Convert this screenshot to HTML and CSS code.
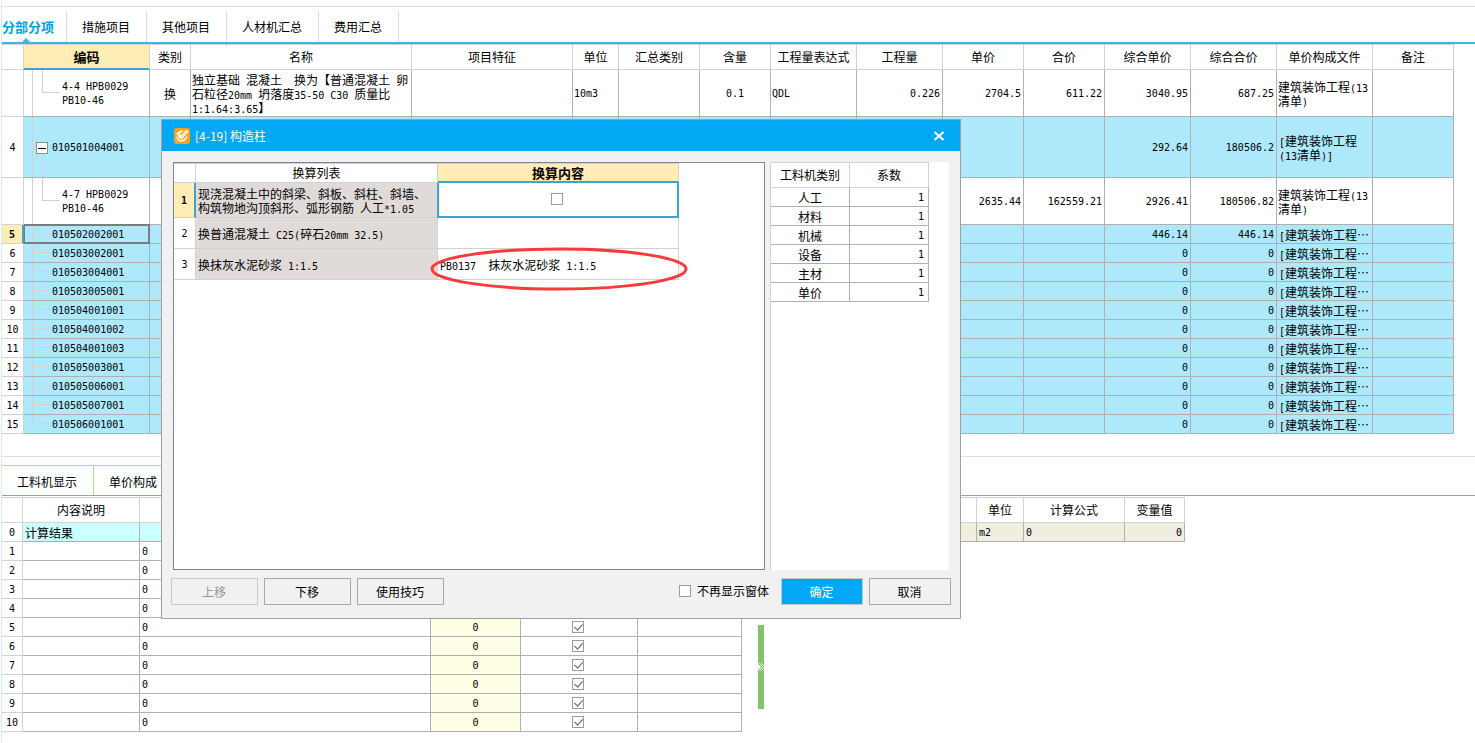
FILE: index.html
```html
<!DOCTYPE html>
<html lang="zh-CN">
<head>
<meta charset="utf-8">
<title>构造柱</title>
<link rel="stylesheet" href="styles.css">
</head>
<body>
<div class="app">
  <div class="toolbar-edge"></div>
  <nav class="tabs">
    <button class="tab active">分部分项</button>
    <button class="tab">措施项目</button>
    <button class="tab">其他项目</button>
    <button class="tab">人材机汇总</button>
    <button class="tab">费用汇总</button>
  </nav>

  <main class="list-pane">
    <table class="grid bill">
      <colgroup><col class="w22"><col class="w126"><col class="w41"><col class="w221"><col class="w161"><col class="w46"><col class="w81"><col class="w71"><col class="w86"><col class="w86"><col class="w81"><col class="w81"><col class="w86"><col class="w86"><col class="w96"><col class="w81"></colgroup>
      <thead>
        <tr><th></th><th class="current">编码</th><th>类别</th><th>名称</th><th>项目特征</th><th>单位</th><th>汇总类别</th><th>含量</th><th>工程量表达式</th><th>工程量</th><th>单价</th><th>合价</th><th>综合单价</th><th>综合合价</th><th>单价构成文件</th><th>备注</th></tr>
      </thead>
      <tbody>
        <tr class="tall"><th></th><td class="code child">4-4 HPB0029<br>PB10-46</td><td class="mid">换</td><td>独立基础<span class="m"> </span>混凝土<span class="m">  </span>换为【普通混凝土<span class="m"> </span>卵<br>石粒径<span class="m">20mm </span>坍落度<span class="m">35-50 C30 </span>质量比<br><span class="m">1:1.64:3.65</span>】</td><td></td><td class="num">10m3</td><td></td><td class="num mid">0.1</td><td class="num">QDL</td><td class="num end">0.226</td><td class="num end">2704.5</td><td class="num end">611.22</td><td class="num end">3040.95</td><td class="num end">687.25</td><td>建筑装饰工程<span class="m">(13</span><br>清单<span class="m">)</span></td><td></td></tr>
        <tr class="bill-row group"><th>4</th><td class="code parent"><button class="fold" aria-label="折叠"></button>010501004001</td><td></td><td></td><td></td><td></td><td></td><td></td><td></td><td></td><td></td><td></td><td class="num end">292.64</td><td class="num end">180506.2</td><td><span class="m">[</span>建筑装饰工程<br><span class="m">(13</span>清单<span class="m">)]</span></td><td></td></tr>
        <tr class="tall"><th></th><td class="code child">4-7 HPB0029<br>PB10-46</td><td></td><td></td><td></td><td></td><td></td><td></td><td></td><td></td><td class="num end">2635.44</td><td class="num end">162559.21</td><td class="num end">2926.41</td><td class="num end">180506.82</td><td>建筑装饰工程<span class="m">(13</span><br>清单<span class="m">)</span></td><td></td></tr>
        <tr class="bill-row selected"><th>5</th><td class="code">010502002001</td><td></td><td></td><td></td><td></td><td></td><td></td><td></td><td></td><td></td><td></td><td class="num end">446.14</td><td class="num end">446.14</td><td><span class="m">[</span>建筑装饰工程…</td><td></td></tr>
        <tr class="bill-row"><th>6</th><td class="code">010503002001</td><td></td><td></td><td></td><td></td><td></td><td></td><td></td><td></td><td></td><td></td><td class="num end">0</td><td class="num end">0</td><td><span class="m">[</span>建筑装饰工程…</td><td></td></tr>
        <tr class="bill-row"><th>7</th><td class="code">010503004001</td><td></td><td></td><td></td><td></td><td></td><td></td><td></td><td></td><td></td><td></td><td class="num end">0</td><td class="num end">0</td><td><span class="m">[</span>建筑装饰工程…</td><td></td></tr>
        <tr class="bill-row"><th>8</th><td class="code">010503005001</td><td></td><td></td><td></td><td></td><td></td><td></td><td></td><td></td><td></td><td></td><td class="num end">0</td><td class="num end">0</td><td><span class="m">[</span>建筑装饰工程…</td><td></td></tr>
        <tr class="bill-row"><th>9</th><td class="code">010504001001</td><td></td><td></td><td></td><td></td><td></td><td></td><td></td><td></td><td></td><td></td><td class="num end">0</td><td class="num end">0</td><td><span class="m">[</span>建筑装饰工程…</td><td></td></tr>
        <tr class="bill-row"><th>10</th><td class="code">010504001002</td><td></td><td></td><td></td><td></td><td></td><td></td><td></td><td></td><td></td><td></td><td class="num end">0</td><td class="num end">0</td><td><span class="m">[</span>建筑装饰工程…</td><td></td></tr>
        <tr class="bill-row"><th>11</th><td class="code">010504001003</td><td></td><td></td><td></td><td></td><td></td><td></td><td></td><td></td><td></td><td></td><td class="num end">0</td><td class="num end">0</td><td><span class="m">[</span>建筑装饰工程…</td><td></td></tr>
        <tr class="bill-row"><th>12</th><td class="code">010505003001</td><td></td><td></td><td></td><td></td><td></td><td></td><td></td><td></td><td></td><td></td><td class="num end">0</td><td class="num end">0</td><td><span class="m">[</span>建筑装饰工程…</td><td></td></tr>
        <tr class="bill-row"><th>13</th><td class="code">010505006001</td><td></td><td></td><td></td><td></td><td></td><td></td><td></td><td></td><td></td><td></td><td class="num end">0</td><td class="num end">0</td><td><span class="m">[</span>建筑装饰工程…</td><td></td></tr>
        <tr class="bill-row"><th>14</th><td class="code">010505007001</td><td></td><td></td><td></td><td></td><td></td><td></td><td></td><td></td><td></td><td></td><td class="num end">0</td><td class="num end">0</td><td><span class="m">[</span>建筑装饰工程…</td><td></td></tr>
        <tr class="bill-row"><th>15</th><td class="code last">010506001001</td><td></td><td></td><td></td><td></td><td></td><td></td><td></td><td></td><td></td><td></td><td class="num end">0</td><td class="num end">0</td><td><span class="m">[</span>建筑装饰工程…</td><td></td></tr>
      </tbody>
    </table>
  </main>

  <section class="detail-pane">
    <nav class="subtabs">
      <button class="tab">工料机显示</button>
      <button class="tab">单价构成</button>
    </nav>
    <div class="detail-body">
      <table class="grid quantities">
        <colgroup><col class="w21"><col class="w117"><col class="w291"><col class="w90"><col class="w117"><col class="w104"></colgroup>
        <thead><tr><th></th><th>内容说明</th><th></th><th></th><th></th><th></th></tr></thead>
        <tbody>
          <tr class="result"><th>0</th><td>计算结果</td><td></td><td></td><td></td><td></td></tr>
          <tr><th>1</th><td></td><td class="num">0</td><td class="num mid">0</td><td class="tick"><input type="checkbox" aria-label="累加" checked></td><td></td></tr>
          <tr><th>2</th><td></td><td class="num">0</td><td class="num mid">0</td><td class="tick"><input type="checkbox" aria-label="累加" checked></td><td></td></tr>
          <tr><th>3</th><td></td><td class="num">0</td><td class="num mid">0</td><td class="tick"><input type="checkbox" aria-label="累加" checked></td><td></td></tr>
          <tr><th>4</th><td></td><td class="num">0</td><td class="num mid">0</td><td class="tick"><input type="checkbox" aria-label="累加" checked></td><td></td></tr>
          <tr><th>5</th><td></td><td class="num">0</td><td class="num mid">0</td><td class="tick"><input type="checkbox" aria-label="累加" checked></td><td></td></tr>
          <tr><th>6</th><td></td><td class="num">0</td><td class="num mid">0</td><td class="tick"><input type="checkbox" aria-label="累加" checked></td><td></td></tr>
          <tr><th>7</th><td></td><td class="num">0</td><td class="num mid">0</td><td class="tick"><input type="checkbox" aria-label="累加" checked></td><td></td></tr>
          <tr><th>8</th><td></td><td class="num">0</td><td class="num mid">0</td><td class="tick"><input type="checkbox" aria-label="累加" checked></td><td></td></tr>
          <tr><th>9</th><td></td><td class="num">0</td><td class="num mid">0</td><td class="tick"><input type="checkbox" aria-label="累加" checked></td><td></td></tr>
          <tr><th>10</th><td></td><td class="num">0</td><td class="num mid">0</td><td class="tick"><input type="checkbox" aria-label="累加" checked></td><td></td></tr>
        </tbody>
      </table>
      <button class="splitter" aria-label="展开">
        <svg width="6" height="10" viewBox="0 0 6 10"><path d="M0 2 3 5 0 8Z" fill="#fff"/><path d="M1 1 5 5 1 9M3 1 6 4M3 9 6 6" fill="none" stroke="#e0f2da"/></svg>
      </button>
      <table class="grid variables">
        <colgroup><col class="w21"><col class="w192"><col class="w47"><col class="w101"><col class="w60"></colgroup>
        <thead><tr><th></th><th></th><th>单位</th><th>计算公式</th><th>变量值</th></tr></thead>
        <tbody><tr><th></th><td></td><td class="num">m2</td><td class="num">0</td><td class="num end">0</td></tr></tbody>
      </table>
    </div>
  </section>
</div>

<div class="dialog" role="dialog" aria-labelledby="dialog-title">
  <header class="titlebar">
    <svg width="16" height="16" viewBox="0 0 16 16"><rect width="16" height="16" rx="3" fill="#f9a51e"/><path d="M2 5.500 7 2.500 9.500 2.800 6 5.500 7 7.500 12.300 1.800 14.800 3.600 8.500 10.500 6 10.800 4 8Z" fill="#fff"/><path d="M2.200 7.500C2.500 11 3.500 13.500 6.500 13.800 10 14 13 12 13.500 7.500L10 11.200 6 12Z" fill="#fff4e0"/><path d="M7.500 9 13 3.500M3.500 7 5.500 6.500" fill="none" stroke="#f9b548" stroke-width=".8"/></svg>
    <h1 id="dialog-title">[4-19] 构造柱</h1>
    <button class="close" aria-label="关闭"><svg width="12" height="10" viewBox="0 0 12 10"><path d="M1.500 1 10.500 9M10.500 1 1.500 9" stroke="#fff" stroke-width="2.200"/></svg></button>
  </header>
  <div class="dialog-body">
    <div class="convert-panel">
      <table class="grid convert">
        <colgroup><col class="w22"><col class="w242"><col class="w241"></colgroup>
        <thead><tr><th></th><th>换算列表</th><th class="current">换算内容</th></tr></thead>
        <tbody>
          <tr class="first"><th>1</th><td>现浇混凝土中的斜梁、斜板、斜柱、斜墙、<br>构筑物地沟顶斜形、弧形钢筋<span class="m"> </span>人工<span class="m">*1.05</span></td><td class="tick focus"><input type="checkbox" aria-label="换算"></td></tr>
          <tr><th>2</th><td>换普通混凝土<span class="m"> C25(</span>碎石<span class="m">20mm 32.5)</span></td><td></td></tr>
          <tr><th>3</th><td>换抹灰水泥砂浆<span class="m"> 1:1.5</span></td><td class="mark-host"><span class="m">PB0137  </span>抹灰水泥砂浆<span class="m"> 1:1.5</span><svg class="mark" width="260" height="46" viewBox="0 0 260 46"><ellipse cx="130" cy="23" rx="127" ry="20" fill="none" stroke="#f93a3a" stroke-width="3"/></svg></td></tr>
        </tbody>
      </table>
    </div>
    <div class="factor-panel">
      <table class="grid factors">
        <colgroup><col class="w79"><col class="w79"></colgroup>
        <thead><tr><th>工料机类别</th><th>系数</th></tr></thead>
        <tbody>
          <tr><td class="mid">人工</td><td class="num end">1</td></tr>
          <tr><td class="mid">材料</td><td class="num end">1</td></tr>
          <tr><td class="mid">机械</td><td class="num end">1</td></tr>
          <tr><td class="mid">设备</td><td class="num end">1</td></tr>
          <tr><td class="mid">主材</td><td class="num end">1</td></tr>
          <tr><td class="mid">单价</td><td class="num end">1</td></tr>
        </tbody>
      </table>
    </div>
  </div>
  <footer class="actions">
    <button class="btn" disabled>上移</button>
    <button class="btn">下移</button>
    <button class="btn">使用技巧</button>
    <label class="hide-again"><input type="checkbox"> 不再显示窗体</label>
    <button class="btn narrow primary">确定</button>
    <button class="btn narrow">取消</button>
  </footer>
</div>
</body>
</html>
```
FILE: styles.css
```css
* { box-sizing: border-box; }

body {
  margin: 0;
  min-height: 100vh;
  background: #fff;
  color: #000;
  font: 12px/14px "Noto Sans CJK SC", sans-serif;
}

button, input { font: inherit; color: inherit; margin: 0; }

.app {
  margin-left: 1px;
  border-left: 1px solid #d8eef6;
  min-height: 100vh;
  overflow: hidden;
}

.toolbar-edge { height: 7px; border-bottom: 1px solid #e0e0e0; }

/* tabs */
.tabs {
  display: flex;
  padding-top: 4px;
  border-bottom: 2px solid #3fb4e0;
}

.tab {
  height: 31px;
  padding: 0 16px 0 15px;
  border: 0;
  border-right: 1px solid #dcdcdc;
  background: #fff;
  white-space: nowrap;
}

.tab.active {
  position: relative;
  padding: 0 12px 0 0;
  color: #00a2e8;
  font-size: 13px;
  font-weight: bold;
}

.tab.active::after {
  content: "";
  position: absolute;
  left: 20px;
  bottom: 0;
  border: 4px solid transparent;
  border-top: 0;
  border-bottom-color: #3fb4e0;
}

/* grids */
.grid {
  width: min-content;
  table-layout: fixed;
  border-collapse: separate;
  border-spacing: 0;
  flex: none;
}

.grid td, .grid th {
  height: 19px;
  padding: 2px 2px 0;
  border: solid #b0b0b0;
  border-width: 0 1px 1px 0;
  text-align: left;
  font-weight: normal;
  white-space: nowrap;
}

.grid th { border-color: #d2d2d2; text-align: center; padding: 2px 0 0; }
.grid thead th { height: 26px; border-top-width: 1px; padding: 0; }
.grid tbody th, .grid .num, .grid .code, .m { font-family: "DejaVu Sans Mono", "Noto Sans CJK SC", monospace; font-size: 10px; }
.m { white-space: pre; line-height: 1px; }
.grid .mid, .grid .tick { text-align: center; }
.grid .tick { padding: 0 2px 1px 0; }
.grid .end { text-align: right; }

.grid th.current {
  background: #ffedb5;
  border-bottom: 2px solid #3ba5d0;
  font-size: 13px;
  font-weight: bold;
}

.w21 { width: 21px; } .w22 { width: 22px; } .w41 { width: 41px; } .w46 { width: 46px; }
.w47 { width: 47px; } .w60 { width: 60px; } .w71 { width: 71px; } .w79 { width: 79px; }
.w81 { width: 81px; } .w86 { width: 86px; } .w90 { width: 90px; } .w96 { width: 96px; }
.w101 { width: 101px; } .w104 { width: 104px; } .w117 { width: 117px; } .w126 { width: 126px; }
.w161 { width: 161px; } .w192 { width: 192px; } .w221 { width: 221px; } .w241 { width: 241px; }
.w242 { width: 242px; } .w291 { width: 291px; }

/* bill of quantities */
.list-pane { padding-bottom: 22px; border-bottom: 1px solid #e0e0e0; }
.bill { width: 1452px; }
.bill .tall td { height: 47px; padding: 2px 1px 0; }
.bill .group td { height: 61px; }
.bill .bill-row td { background-color: #aee9fb; }
.bill .bill-row .end, .bill .tall .end { padding-right: 2px; }

/* tree connectors */
.bill td.code {
  padding-left: 28px;
  background-image: linear-gradient(#d2d2d2, #d2d2d2), linear-gradient(#d2d2d2, #d2d2d2);
  background-repeat: no-repeat;
  background-position: 8px 0, 8px 8px;
  background-size: 1px 100%, 17px 1px;
}

.bill td.last { background-size: 1px 9px, 17px 1px; }

.bill .tall td.child {
  padding-left: 38px;
  background-image: linear-gradient(#d2d2d2, #d2d2d2), linear-gradient(#d2d2d2, #d2d2d2), linear-gradient(#d2d2d2, #d2d2d2);
  background-position: 8px 0, 18px 0, 18px 22px;
  background-size: 1px 100%, 1px 22px, 18px 1px;
}

.bill td.parent {
  padding-left: 12px;
  background-image: linear-gradient(#d2d2d2, #d2d2d2), linear-gradient(#d2d2d2, #d2d2d2), linear-gradient(#d2d2d2, #d2d2d2);
  background-position: 8px 0, 8px 29px, 18px 36px;
  background-size: 1px 100%, 4px 1px, 1px 100%;
}

.fold {
  width: 12px;
  height: 12px;
  margin-right: 4px;
  padding: 0;
  border: 1px solid #909090;
  background: linear-gradient(#000, #000) center / 8px 1px no-repeat #fff;
  vertical-align: middle;
}

.selected th {
  background: #ffedb5;
  border-right: 2px solid #3ba5d0;
  font-weight: bold;
}

.grid .selected .code {
  border-right: 2px solid #7c7c80;
  border-bottom: 2px solid #7c7c80;
  box-shadow: 0 -1px #7c7c80, inset 1px 1px #7c7c80;
}

/* detail pane */
.subtabs {
  display: flex;
  margin-top: 8px;
  border-bottom: 1px solid #76c060;
}

.subtabs .tab { height: 30px; border-top: 1px solid #a8e08c; border-right-color: #a8e08c; padding-top: 3px; }
.detail-body { display: flex; align-items: flex-start; padding-top: 1px; }
.quantities { width: 740px; }
.quantities tbody td:nth-child(4) { background: #ffffe6; }
.quantities .result td:nth-child(n) { background: #ccffff; }
.variables { width: 421px; }
.variables tbody td { background: #f0eee0; }

.splitter {
  display: flex;
  align-items: center;
  width: 6px;
  height: 84px;
  margin: 128px 0 0 16px;
  padding: 0;
  border: 0;
  background: #82c46a;
}

input[type="checkbox"] {
  appearance: none;
  display: block;
  flex: none;
  width: 12px;
  height: 12px;
  border: 1px solid #9c9c9c;
  background: #fff;
}

.tick input[type="checkbox"] { margin: 0 auto; }

input[type="checkbox"]:checked::before {
  content: "";
  display: block;
  width: 4px;
  height: 7px;
  margin: 0 0 0 3px;
  border: solid #5c5c70;
  border-width: 0 1px 1px 0;
  transform: rotate(42deg);
}

/* dialog */
.dialog {
  position: absolute;
  left: 161px;
  top: 119px;
  width: 800px;
  border: 1px solid #a0a0a0;
  background: #f1f1f1;
}

.titlebar {
  display: flex;
  align-items: center;
  height: 31px;
  padding: 0 15px 0 12px;
  background: #02a8f3;
  color: #fff;
}

.titlebar h1 { flex: 1; margin: 0 0 0 5px; font-size: 12px; font-weight: normal; }
.close { display: flex; padding: 0; border: 0; background: none; }

.dialog-body {
  display: flex;
  padding: 11px 11px 0;
}

.convert-panel { width: 592px; height: 408px; border: 1px solid #828290; background: #fff; }
.convert { width: 505px; }
.grid.convert thead th { height: 20px; }
.grid.convert td, .grid.convert th { border-color: #d2d2d2; height: 31px; }
.grid.convert .first td { height: 35px; }
.convert td:nth-child(2) { background: #e0dbd8; }
.grid.convert thead .current { border-bottom-color: #3ba5d0; }
.grid.convert .first th {
  background: #ffedb5;
  border-right: 2px solid #3ba5d0;
  font-weight: bold;
}
.grid.convert .first .focus {
  border: 2px solid #3ba5d0;
  border-width: 0 2px 2px 1px;
  box-shadow: -1px 0 #3ba5d0;
}
.grid.convert .mark-host { position: relative; }
.mark { position: absolute; left: -9px; top: -3px; }

.factor-panel { flex: 1; margin-left: 5px; border-left: 1px solid #d2d2d2; background: #fff; }
.factors { width: 158px; }
.grid.factors .end { padding-right: 4px; }

.actions {
  display: flex;
  gap: 6px;
  padding: 8px 9px 13px;
}

.btn {
  width: 87px;
  height: 27px;
  padding: 0 1px 0 0;
  border: 1px solid #a8a8a8;
  background: #f1f1f1;
}

.btn.narrow { width: 82px; }
.btn:disabled { border-color: #cacaca; color: #959595; }
.btn.primary { border-color: #c8c8c8; background: #02a8f3; color: #fff; }

.hide-again {
  display: flex;
  align-items: center;
  gap: 6px;
  margin: 0 6px 2px auto;
}
```
